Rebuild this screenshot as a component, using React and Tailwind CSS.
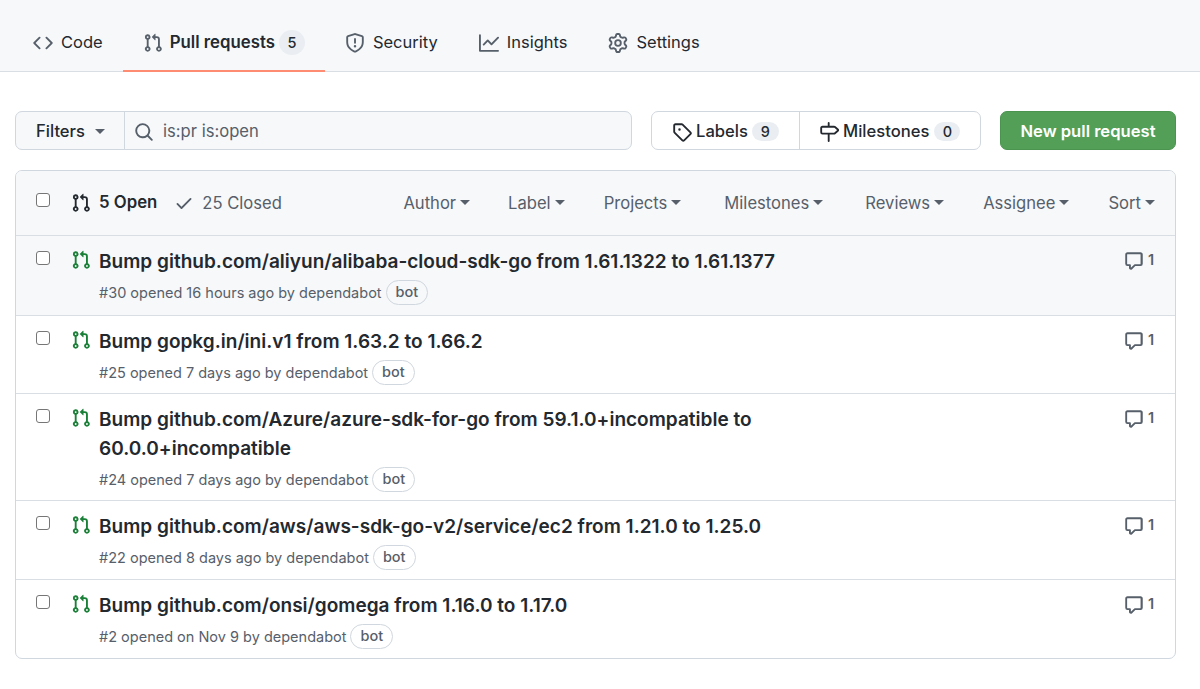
import React from "react";

const paths = {
  pr: "M1.5 3.25a2.25 2.25 0 1 1 3 2.122v5.256a2.251 2.251 0 1 1-1.5 0V5.372A2.25 2.25 0 0 1 1.5 3.25Zm5.677-.177L9.573.677A.25.25 0 0 1 10 .854V2.5h1A2.5 2.5 0 0 1 13.5 5v5.628a2.251 2.251 0 1 1-1.5 0V5a1 1 0 0 0-1-1h-1v1.646a.25.25 0 0 1-.427.177L7.177 3.427a.25.25 0 0 1 0-.354ZM3.75 2.5a.75.75 0 1 0 0 1.5.75.75 0 0 0 0-1.5Zm0 9.5a.75.75 0 1 0 0 1.5.75.75 0 0 0 0-1.5Zm8.25.75a.75.75 0 1 0 1.5 0 .75.75 0 0 0-1.5 0Z",
  code: "m11.28 3.22 4.25 4.25a.75.75 0 0 1 0 1.06l-4.25 4.25a.749.749 0 0 1-1.275-.326.749.749 0 0 1 .215-.734L13.94 8l-3.72-3.72a.749.749 0 0 1 .326-1.275.749.749 0 0 1 .734.215Zm-6.56 0a.751.751 0 0 1 1.042.018.751.751 0 0 1 .018 1.042L2.06 8l3.72 3.72a.749.749 0 0 1-.326 1.275.749.749 0 0 1-.734-.215L.47 8.53a.75.75 0 0 1 0-1.06Z",
  shield: "M7.467.133a1.748 1.748 0 0 1 1.066 0l5.25 1.68A1.75 1.75 0 0 1 15 3.48V7c0 1.566-.32 3.182-1.303 4.682-.983 1.498-2.585 2.813-5.032 3.855a1.697 1.697 0 0 1-1.33 0c-2.447-1.042-4.049-2.357-5.032-3.855C1.32 10.182 1 8.566 1 7V3.48a1.75 1.75 0 0 1 1.217-1.667Zm.61 1.429a.25.25 0 0 0-.153 0l-5.25 1.68a.25.25 0 0 0-.174.238V7c0 1.358.275 2.666 1.057 3.86.784 1.194 2.121 2.34 4.366 3.297a.196.196 0 0 0 .154 0c2.245-.956 3.582-2.104 4.366-3.298C13.225 9.666 13.5 8.36 13.5 7V3.48a.251.251 0 0 0-.174-.237l-5.25-1.68ZM8.75 4.75v3a.75.75 0 0 1-1.5 0v-3a.75.75 0 0 1 1.5 0ZM9 10.5a1 1 0 1 1-2 0 1 1 0 0 1 2 0Z",
  graph: "M1.5 1.75V13.5h13.75a.75.75 0 0 1 0 1.5H.75a.75.75 0 0 1-.75-.75V1.75a.75.75 0 0 1 1.5 0Zm14.28 2.53-5.25 5.25a.75.75 0 0 1-1.06 0L7 7.06 4.28 9.78a.751.751 0 0 1-1.042-.018.751.751 0 0 1-.018-1.042l3.25-3.25a.75.75 0 0 1 1.06 0L10 7.94l4.72-4.72a.751.751 0 0 1 1.042.018.751.751 0 0 1 .018 1.042Z",
  gear: "M8 0a8.2 8.2 0 0 1 .701.031C9.444.095 9.99.645 10.16 1.29l.288 1.107c.018.066.079.158.212.224.231.114.454.243.668.386.123.082.233.09.299.071l1.103-.303c.644-.176 1.392.021 1.82.63.27.385.506.792.704 1.218.315.675.111 1.422-.364 1.891l-.814.806c-.049.048-.098.147-.088.294.016.257.016.515 0 .772-.01.147.038.246.088.294l.814.806c.475.469.679 1.216.364 1.891a7.977 7.977 0 0 1-.704 1.217c-.428.61-1.176.807-1.82.63l-1.102-.302c-.067-.019-.177-.011-.3.071a5.909 5.909 0 0 1-.668.386c-.133.066-.194.158-.211.224l-.29 1.106c-.168.646-.715 1.196-1.458 1.26a8.006 8.006 0 0 1-1.402 0c-.743-.064-1.289-.614-1.458-1.26l-.289-1.106c-.018-.066-.079-.158-.212-.224a5.738 5.738 0 0 1-.668-.386c-.123-.082-.233-.09-.299-.071l-1.103.303c-.644.176-1.392-.021-1.82-.63a8.12 8.12 0 0 1-.704-1.218c-.315-.675-.111-1.422.363-1.891l.815-.806c.05-.048.098-.147.088-.294a6.214 6.214 0 0 1 0-.772c.01-.147-.038-.246-.088-.294l-.815-.806C.635 6.045.431 5.298.746 4.623a7.92 7.92 0 0 1 .704-1.217c.428-.61 1.176-.807 1.82-.63l1.102.302c.067.019.177.011.3-.071.214-.143.437-.272.668-.386.133-.066.194-.158.211-.224l.29-1.106C6.009.645 6.556.095 7.299.03 7.53.01 7.764 0 8 0Zm-.571 1.525c-.036.003-.108.036-.137.146l-.289 1.105c-.147.561-.549.967-.998 1.189-.173.086-.34.183-.5.29-.417.278-.97.423-1.529.27l-1.103-.303c-.109-.03-.175.016-.195.045-.22.312-.412.644-.573.99-.014.031-.021.11.059.19l.815.806c.411.406.562.957.53 1.456a4.709 4.709 0 0 0 0 .582c.032.499-.119 1.05-.53 1.456l-.815.806c-.081.08-.073.159-.059.19.162.346.353.677.573.989.02.03.085.076.195.046l1.102-.303c.56-.153 1.113-.008 1.53.27.161.107.328.204.501.29.447.222.85.629.997 1.189l.289 1.105c.029.109.101.143.137.146a6.6 6.6 0 0 0 1.142 0c.036-.003.108-.036.137-.146l.289-1.105c.147-.561.549-.967.998-1.189.173-.086.34-.183.5-.29.417-.278.97-.423 1.529-.27l1.103.303c.109.029.175-.016.195-.045.22-.313.411-.644.573-.99.014-.031.021-.11-.059-.19l-.815-.806c-.411-.406-.562-.957-.53-1.456a4.709 4.709 0 0 0 0-.582c-.032-.499.119-1.05.53-1.456l.815-.806c.081-.08.073-.159.059-.19a6.464 6.464 0 0 0-.573-.989c-.02-.03-.085-.076-.195-.046l-1.102.303c-.56.153-1.113.008-1.53-.27a4.44 4.44 0 0 0-.501-.29c-.447-.222-.85-.629-.997-1.189l-.289-1.105c-.029-.11-.101-.143-.137-.146a6.6 6.6 0 0 0-1.142 0ZM11 8a3 3 0 1 1-6 0 3 3 0 0 1 6 0ZM9.5 8a1.5 1.5 0 1 0-3.001.001A1.5 1.5 0 0 0 9.5 8Z",
  search: "M10.68 11.74a6 6 0 0 1-7.922-8.982 6 6 0 0 1 8.982 7.922l3.04 3.04a.749.749 0 0 1-.326 1.275.749.749 0 0 1-.734-.215ZM11.5 7a4.499 4.499 0 1 0-8.997 0A4.499 4.499 0 0 0 11.5 7Z",
  tag: "M1 7.775V2.75C1 1.784 1.784 1 2.75 1h5.025c.464 0 .91.184 1.238.513l6.25 6.25a1.75 1.75 0 0 1 0 2.474l-5.026 5.026a1.75 1.75 0 0 1-2.474 0l-6.25-6.25A1.752 1.752 0 0 1 1 7.775Zm1.5 0c0 .066.026.13.073.177l6.25 6.25a.25.25 0 0 0 .354 0l5.025-5.025a.25.25 0 0 0 0-.354l-6.25-6.25a.25.25 0 0 0-.177-.073H2.75a.25.25 0 0 0-.25.25ZM6 5a1 1 0 1 1 0 2 1 1 0 0 1 0-2Z",
  milestone: "M7.75 0a.75.75 0 0 1 .75.75V3h3.634c.414 0 .814.147 1.13.414l2.07 1.75a1.75 1.75 0 0 1 0 2.672l-2.07 1.75a1.75 1.75 0 0 1-1.13.414H8.5v5.25a.75.75 0 0 1-1.5 0V10H2.75A1.75 1.75 0 0 1 1 8.25v-3.5C1 3.784 1.784 3 2.75 3H7V.75A.75.75 0 0 1 7.75 0Zm4.384 8.5a.25.25 0 0 0 .161-.06l2.07-1.75a.248.248 0 0 0 0-.38l-2.07-1.75a.25.25 0 0 0-.161-.06H2.75a.25.25 0 0 0-.25.25v3.5c0 .138.112.25.25.25h9.384Z",
  check: "M13.78 4.22a.75.75 0 0 1 0 1.06l-7.25 7.25a.75.75 0 0 1-1.06 0L2.22 9.28a.751.751 0 0 1 .018-1.042.751.751 0 0 1 1.042-.018L6 10.94l6.72-6.72a.75.75 0 0 1 1.06 0Z",
  comment: "M1 2.75C1 1.784 1.784 1 2.75 1h10.5c.966 0 1.75.784 1.75 1.75v7.5A1.75 1.75 0 0 1 13.25 12H9.06l-2.573 2.573A1.458 1.458 0 0 1 4 13.543V12H2.75A1.75 1.75 0 0 1 1 10.25Zm1.75-.25a.25.25 0 0 0-.25.25v7.5c0 .138.112.25.25.25h2a.75.75 0 0 1 .75.75v2.19l2.72-2.72a.749.749 0 0 1 .53-.22h4.25a.25.25 0 0 0 .25-.25v-7.5a.25.25 0 0 0-.25-.25Z",
};

const Icon = ({ name, className }) => (
  <svg viewBox="0 0 16 16" fill="currentColor" className={className}>
    <path d={paths[name]} />
  </svg>
);

const Caret = ({ className = "" }) => (
  <span
    className={`inline-block w-0 h-0 border-x-[5px] border-x-transparent border-t-[5px] border-t-current ${className}`}
  />
);

const Checkbox = ({ className = "" }) => (
  <span className={`block w-[14px] h-[14px] shrink-0 rounded-[3px] border border-[#767676] bg-white ${className}`} />
);

const tabs = [
  { label: "Code", icon: "code", ml: "" },
  { label: "Pull requests", icon: "pr", active: true, count: 5, ml: "" },
  { label: "Security", icon: "shield", ml: "" },
  { label: "Insights", icon: "graph", ml: "ml-[1px]" },
  { label: "Settings", icon: "gear", ml: "ml-[1px]" },
];

const sortMenus = [
  { label: "Author", ml: "" },
  { label: "Label", ml: "ml-[38px]" },
  { label: "Projects", ml: "ml-[39px]" },
  { label: "Milestones", ml: "ml-[43px]" },
  { label: "Reviews", ml: "ml-[42px]" },
  { label: "Assignee", ml: "ml-[39px]" },
  { label: "Sort", ml: "ml-[39px]" },
];

const pullRequests = [
  {
    title: "Bump github.com/aliyun/alibaba-cloud-sdk-go from 1.61.1322 to 1.61.1377",
    meta: "#30 opened 16 hours ago by dependabot",
    highlight: true,
    pb: "pb-[10px]",
  },
  { title: "Bump gopkg.in/ini.v1 from 1.63.2 to 1.66.2", meta: "#25 opened 7 days ago by dependabot", pb: "pb-[8px]" },
  {
    title: "Bump github.com/Azure/azure-sdk-for-go from 59.1.0+incompatible to 60.0.0+incompatible",
    meta: "#24 opened 7 days ago by dependabot",
    pb: "pb-[8px]",
  },
  {
    title: "Bump github.com/aws/aws-sdk-go-v2/service/ec2 from 1.21.0 to 1.25.0",
    meta: "#22 opened 8 days ago by dependabot",
    pb: "pb-[9px]",
  },
  {
    title: "Bump github.com/onsi/gomega from 1.16.0 to 1.17.0",
    meta: "#2 opened on Nov 9 by dependabot",
    pb: "pb-[9px]",
  },
];

const PullRow = ({ pr, last }) => (
  <div
    className={`flex pl-5 pr-5 pt-[11px] ${pr.pb} ${pr.highlight ? "bg-[#f6f8fa]" : ""} ${
      last ? "" : "border-b border-[#d8dee4]"
    }`}
  >
    <div className="pt-[4px] shrink-0">
      <Checkbox />
    </div>
    <Icon name="pr" className="w-[20px] h-[20px] ml-[21px] mt-[3px] shrink-0 text-[#1a7f37]" />
    <div className="ml-[8px] flex-1">
      <div className="max-w-[700px] text-[19.05px] leading-[29px] font-semibold text-[#24292f]">{pr.title}</div>
      <div className="flex items-center mt-[4px] text-[14.5px] leading-[25px] text-[#57606a]">
        <span>{pr.meta}</span>
        <span className="ml-[4px] h-[25px] px-[9px] rounded-full border border-[#d0d7de] text-[14.5px] leading-[22px] font-medium text-[#57606a]">
          bot
        </span>
      </div>
    </div>
    <div className="flex items-start text-[#57606a] shrink-0">
      <Icon name="comment" className="w-[20px] h-[20px] mt-[4px]" />
      <span className="ml-[4px] mt-[2px] text-[14.5px] leading-[22px] font-semibold w-[7px]">1</span>
    </div>
  </div>
);

export default function App() {
  return (
    <div className="min-h-[689px] bg-white text-[#24292f] font-['Inter',sans-serif]">
      {/* Repo tabs */}
      <nav className="h-[72px] bg-[#f6f8fa] border-b border-[#d8dee4] flex pl-[13px]">
        {tabs.map((tab) => (
          <div
            key={tab.label}
            className={`flex items-center px-5 pt-[15px] h-[72px] border-b-2 ${tab.ml} ${
              tab.active ? "border-[#fd8c73] font-semibold text-[16.8px]" : "border-transparent text-[16.5px]"
            }`}
          >
            <Icon
              name={tab.icon}
              className={`w-[20px] h-[20px] text-[#57606a] ${tab.active ? "mr-[7px]" : "mr-[8px]"}`}
            />
            <span>{tab.label}</span>
            {tab.count && (
              <span className="ml-[4px] w-[26px] h-[25px] rounded-full bg-[#eaeef2] flex items-center justify-center text-[14.5px] font-medium">
                {tab.count}
              </span>
            )}
          </div>
        ))}
      </nav>

      {/* Filter bar */}
      <div className="flex px-[15px] mt-[39px] h-[39px] text-[16.6px]">
        <div className="flex w-[617px] rounded-[7px] border border-[#d0d7de] bg-[#f6f8fa]">
          <div className="w-[109px] flex items-center pl-5 pt-[2px] border-r border-[#d0d7de] font-medium">
            Filters
            <Caret className="ml-[10px] text-[#57606a]" />
          </div>
          <div className="flex items-center pl-[9px] pt-[2px] text-[#57606a]">
            <Icon name="search" className="w-[20px] h-[20px] mr-[9px]" />
            is:pr is:open
          </div>
        </div>
        <div className="ml-[19px] w-[330px] flex rounded-[7px] border border-[#d0d7de] font-medium">
          <div className="w-[148px] flex items-center pl-5 pt-[2px] border-r border-[#d0d7de]">
            <Icon name="tag" className="w-[20px] h-[20px] mr-[4px]" />
            Labels
            <span className="ml-[4px] w-[27px] h-[19px] rounded-full bg-[#eaeef2] flex items-center justify-center text-[14.5px]">
              9
            </span>
          </div>
          <div className="flex-1 flex items-center pl-[19px] pt-[2px]">
            <Icon name="milestone" className="w-[20px] h-[20px] mr-[4px]" />
            Milestones
            <span className="ml-[5px] w-[26px] h-[19px] rounded-full bg-[#eaeef2] flex items-center justify-center text-[14.5px]">
              0
            </span>
          </div>
        </div>
        <div className="ml-[19px] w-[176px] rounded-[7px] bg-[#539f57] border border-[#4a9450] pt-[2px] text-white text-[16.6px] font-semibold flex items-center justify-center">
          New pull request
        </div>
      </div>

      {/* Pull request list */}
      <div className="mx-[15px] mt-[20px] w-[1161px] rounded-[7px] border border-[#d0d7de] overflow-hidden">
        <div className="h-[65px] bg-[#f6f8fa] border-b border-[#d8dee4] flex items-center pl-5 pr-5 text-[16.6px]">
          <Checkbox className="mb-[6px]" />
          <Icon name="pr" className="w-[20px] h-[20px] ml-[21px] mr-[8px]" />
          <span className="font-semibold text-[16.8px]">5 Open</span>
          <Icon name="check" className="w-[20px] h-[20px] ml-[17px] mr-[8px] text-[#57606a]" />
          <span className="text-[#57606a]">25 Closed</span>
          <div className="ml-auto flex items-center text-[#57606a]">
            {sortMenus.map((menu) => (
              <div key={menu.label} className={`flex items-center ${menu.ml}`}>
                {menu.label}
                <Caret className="ml-[4px]" />
              </div>
            ))}
          </div>
        </div>
        {pullRequests.map((pr, i) => (
          <PullRow key={pr.meta} pr={pr} last={i === pullRequests.length - 1} />
        ))}
      </div>
    </div>
  );
}
